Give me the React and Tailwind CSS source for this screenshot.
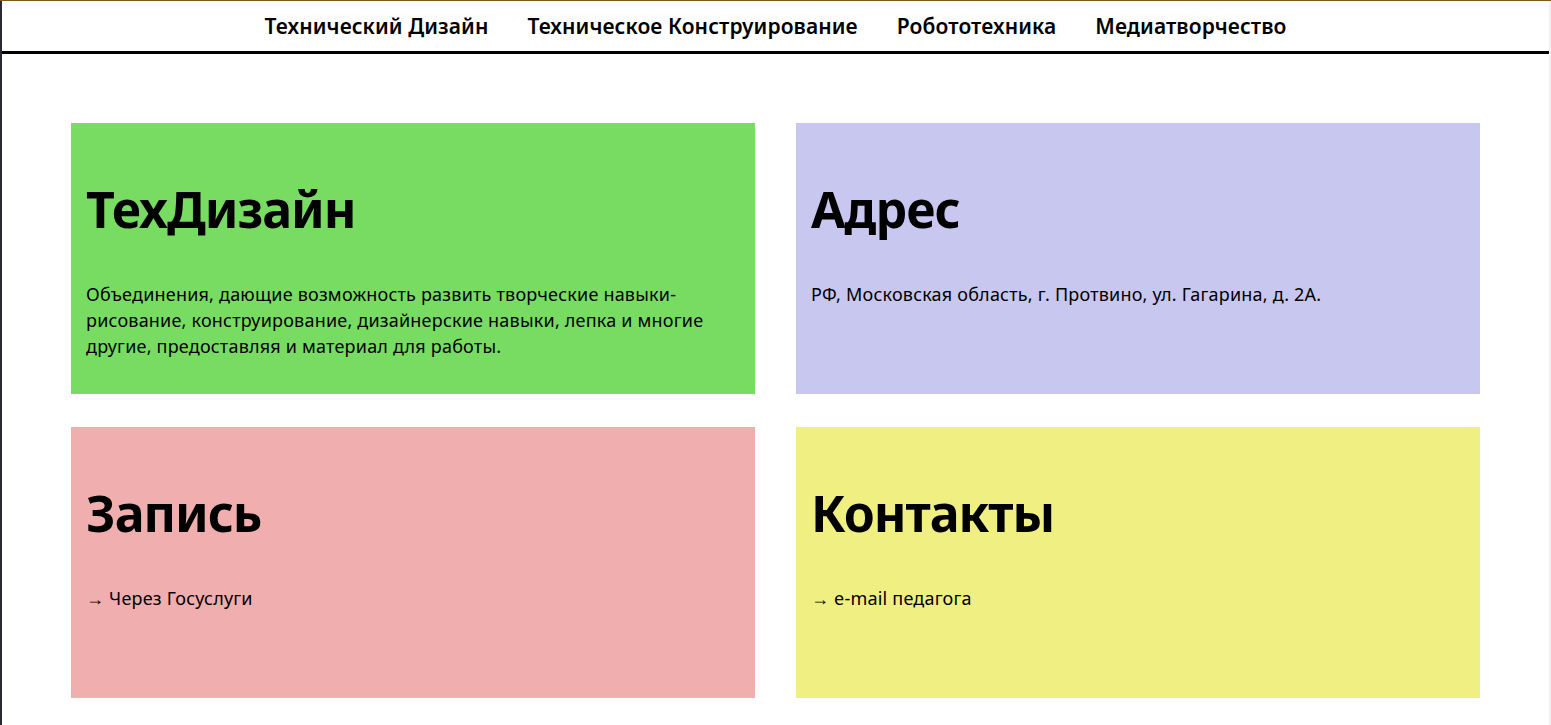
// App.jsx — page "ТехДизайн": верхнее меню + четыре цветные карточки

const navItems = [
    'Технический Дизайн',
    'Техническое Конструирование',
    'Робототехника',
    'Медиатворчество',
];

const cards = [
    {
        title: 'ТехДизайн',
        bg: 'bg-[#78dc62]',
        body: (
            <p>
                Объединения, дающие возможность развить творческие навыки-
                <br />
                рисование, конструирование, дизайнерские навыки, лепка и многие
                <br />
                другие, предоставляя и материал для работы.
            </p>
        ),
    },
    {
        title: 'Адрес',
        bg: 'bg-[#c8c7ef]',
        body: <p>РФ, Московская область, г. Протвино, ул. Гагарина, д. 2А.</p>,
    },
    {
        title: 'Запись',
        bg: 'bg-[#f0aeae]',
        body: <p>→ Через Госуслуги</p>,
    },
    {
        title: 'Контакты',
        bg: 'bg-[#f0ef82]',
        body: <p>→ e-mail педагога</p>,
    },
];

export default function App() {
    return (
        <div
            className="flex h-[725px] overflow-hidden bg-white text-black border-t border-[#7a5a1e]"
            style={{ fontFamily: '"Noto Sans", "Open Sans", sans-serif' }}
        >
            {/* ── левая рамка окна ── */}
            <div className="w-[2px] shrink-0 bg-[#2b2a33]" />

            <div className="flex-1 min-w-0">
                {/* ── Навигация ── */}
                <nav className="flex justify-center gap-[39px] h-[53px] items-center pt-[2px] border-b-[3px] border-black text-[21px] font-semibold tracking-[0.1px]">
                    {navItems.map((item) => (
                        <span key={item}>{item}</span>
                    ))}
                </nav>

                {/* ── Карточки ── */}
                <main className="grid grid-cols-2 gap-x-[41px] gap-y-[33px] pl-[69px] pr-[69px] pt-[69px]">
                    {cards.map((card) => (
                        <section key={card.title} className={`${card.bg} h-[271px] px-[15px]`}>
                            <h2 className="pt-[48px] text-[50px] font-bold leading-[76px] tracking-[-1px]">
                                {card.title}
                            </h2>
                            <div className="mt-[34px] text-[18px] leading-[26px] tracking-[0.2px]">
                                {card.body}
                            </div>
                        </section>
                    ))}
                </main>
            </div>

            {/* ── правая рамка окна ── */}
            <div className="w-[2px] shrink-0 bg-[#f0f0f0]" />
        </div>
    );
}
